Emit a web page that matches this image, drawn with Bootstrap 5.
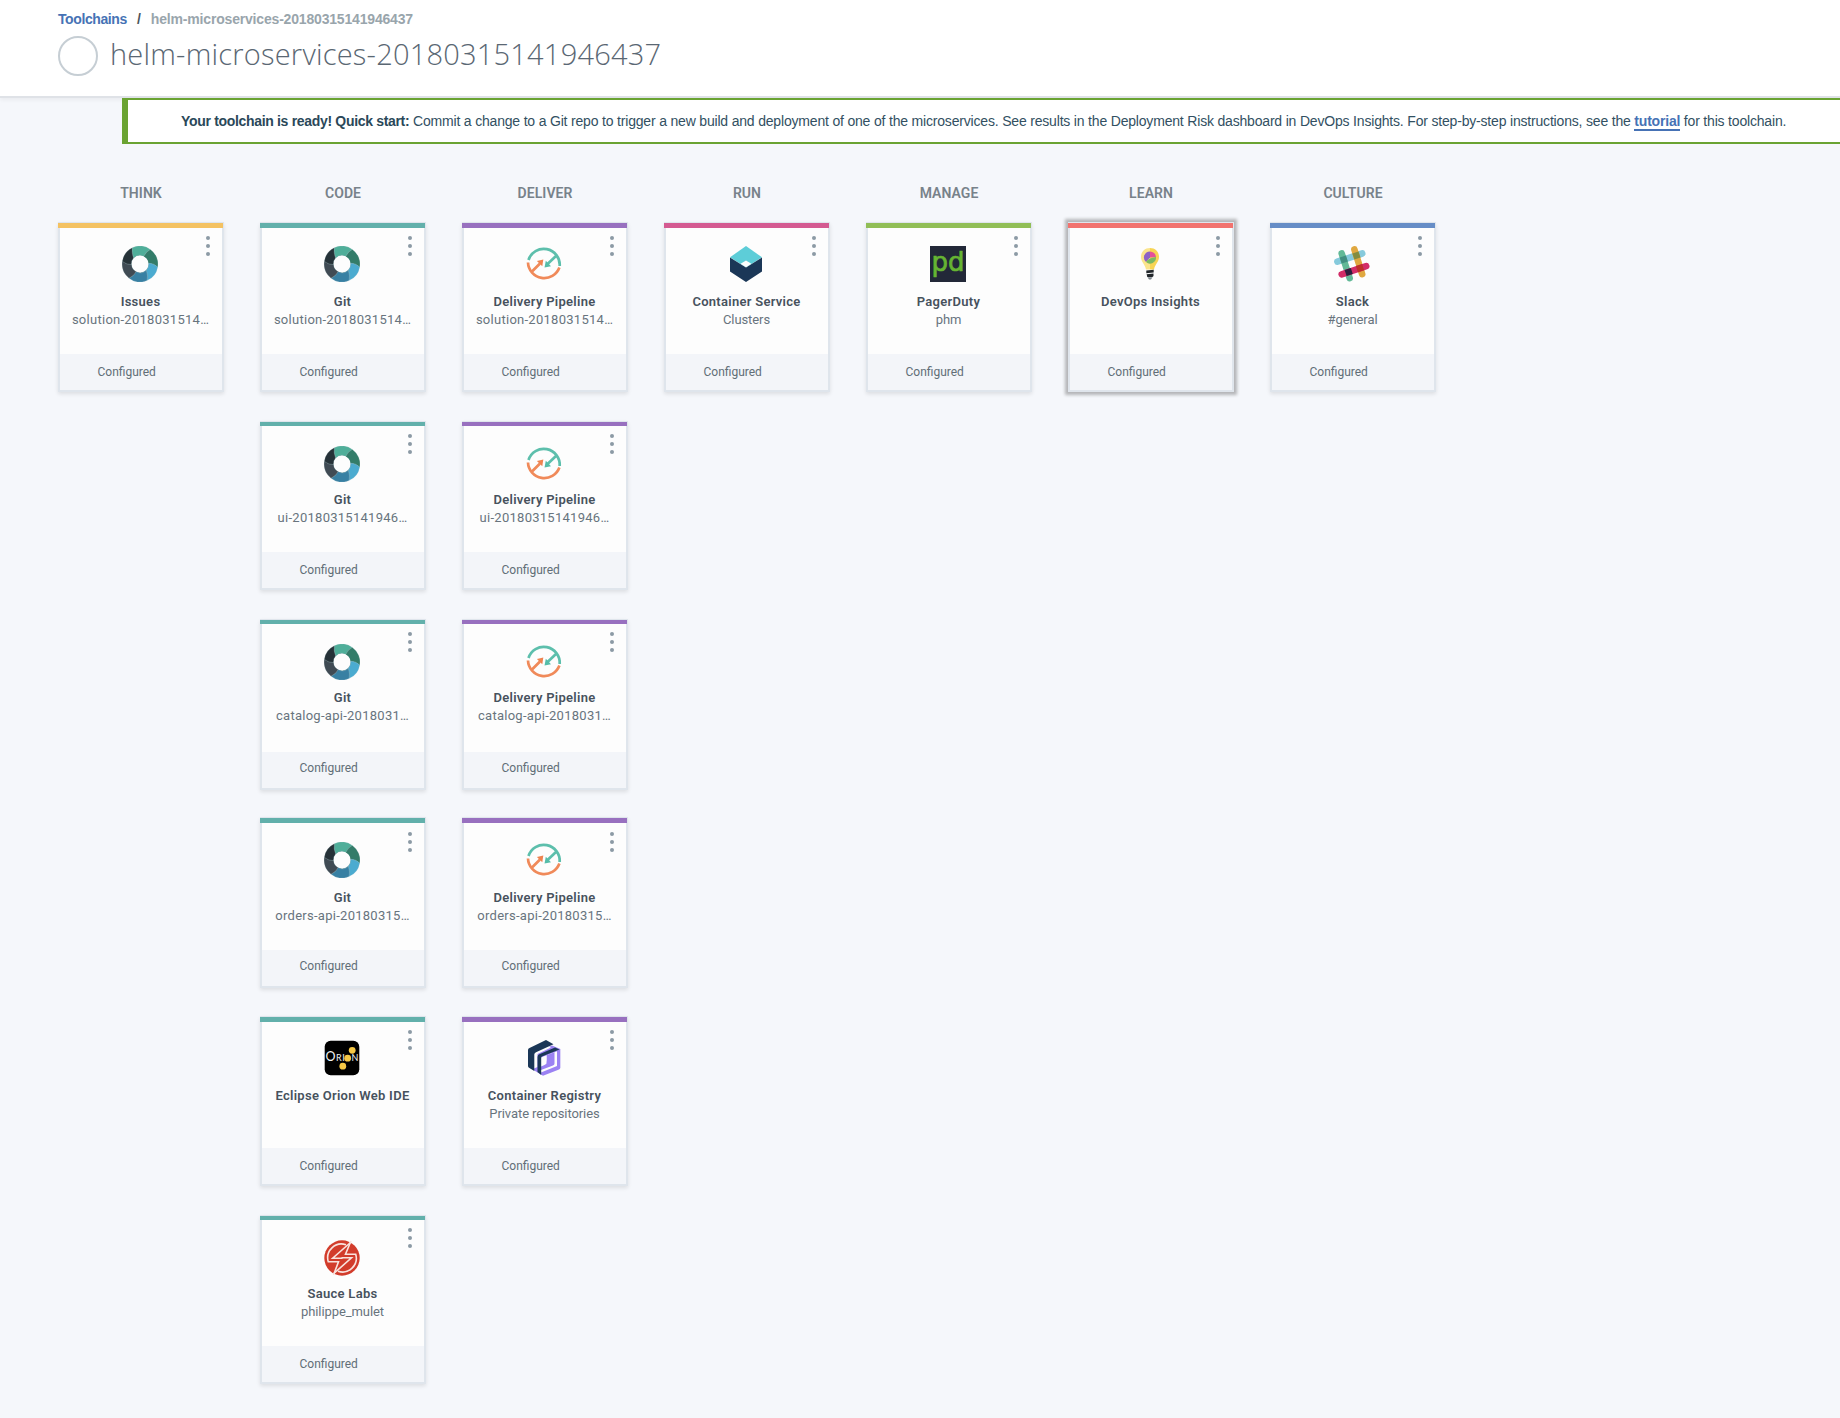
<!DOCTYPE html>
<html lang="en">
<head>
<meta charset="utf-8">
<meta name="viewport" content="width=device-width, initial-scale=1">
<title>helm-microservices-20180315141946437</title>
<link href="https://cdn.jsdelivr.net/npm/bootstrap@5.3.0/dist/css/bootstrap.min.css" rel="stylesheet">
<style>
body{background:#f5f7fb;font-family:Roboto,sans-serif;color:#5a6872;min-height:1418px;overflow-x:hidden}
.page-head{height:98px;background:#fff;border-bottom:2px solid #dfe2e7;box-shadow:0 2px 4px rgba(0,0,0,.05);padding:9px 0 0 58px}
.crumbs{font:700 14px/20px "Liberation Sans",sans-serif;letter-spacing:-.18px;height:20px}
.crumbs a{color:#4672b5;letter-spacing:-.4px;text-decoration:none}
.crumbs .slash{color:#4b555c;width:24px;text-align:center}
.crumbs .here{color:#99a5ac}
.title-row{margin-top:7px}
.ring{width:40px;height:40px;border:2px solid #c6ced4;border-radius:50%}
.page-title{font:300 29px/36px "Open Sans",sans-serif;letter-spacing:.22px;color:#5a6773;margin:0 0 0 12px}
.banner{margin-left:122px;height:46px;border:2px solid #6aa332;border-left-width:6px;border-right:0;background:#fff;padding-left:53px;font:14px/42px "Liberation Sans",sans-serif;letter-spacing:-.184px;color:#325062;white-space:nowrap;position:relative}
.banner b{letter-spacing:-.32px;color:#2a4859}
.banner a{font-weight:700;color:#4672b5;text-decoration:none;border-bottom:2px solid #4672b5;padding-bottom:0;line-height:16px;display:inline-block;letter-spacing:-.2px}
.board{padding:38px 0 0 58px;gap:36px}
.lane{width:166px}
.lane-name{font:600 14px/22px Roboto,sans-serif;letter-spacing:.05px;color:#78828a;text-align:center;height:40px;margin:0}
.slot{height:198px;--bar:4px;--dots:7px;--ico:20px;--gap:9px;--foot:36px;--cfg:18px;--h:169px}
.slot:nth-of-type(1){height:199px;--bar:5px;--dots:7px;--ico:18px;--gap:11px;--h:170px}
.slot:nth-of-type(3){--h:171px;--cfg:16px}
.slot:nth-of-type(4){height:199px;--bar:5px;--dots:8px;--gap:11px;--h:171px;--cfg:16px;--ico:19px}
.slot:nth-of-type(5){height:199px;--bar:5px;--dots:7px;--ico:18px;--gap:11px;--h:170px}
.tool{height:var(--h);border:2px solid #dfe5ec;border-top-width:1px;border-radius:0;background:#fdfdfd;box-shadow:0 2px 4px rgba(0,0,0,.1);width:166px}
.tool .stripe{height:var(--bar);margin:0 -1px 0 -2px;background:var(--c)}
.tool.hot{box-shadow:0 0 3px 3px #b4b5b8}
.tool .body{padding-top:var(--ico);text-align:center;padding-right:1px}
.tool .pic{width:36px;height:36px;display:block;margin:0 auto 0 62px}
.tool h3{font:600 13px/18px Roboto,sans-serif;letter-spacing:.28px;color:#47525d;margin:var(--gap) 0 0;white-space:nowrap}
.tool p{font:400 13px/18px Roboto,sans-serif;letter-spacing:-.08px;color:#68747d;margin:0;white-space:nowrap}
.tool p.num{letter-spacing:.27px}
.tool .state{height:36px;background:#f3f5f9;font-size:12px;line-height:calc(var(--cfg)*2);padding-left:37.5px;color:#616e77}
.kebab{right:12px;top:calc(var(--bar) + var(--dots) + 1px);gap:4px}
.kebab i{width:4px;height:4px;border-radius:50%;background:#8c9aa5}
.think{--c:#f4c262}.code{--c:#62b0ab}.deliver{--c:#9870bf}.run{--c:#d45a91}.manage{--c:#91be56}.learn{--c:#f2736f}.culture{--c:#668dc6}
</style>
<script src="https://cdn.jsdelivr.net/npm/bootstrap@5.3.0/dist/js/bootstrap.bundle.min.js"></script>
</head>
<body>
<svg width="0" height="0" class="position-absolute" aria-hidden="true">
<symbol id="git" viewBox="0 0 36 36">
<circle cx="18" cy="18" r="13" fill="none" stroke="#7fa5a8" stroke-width="9"/>
<g stroke="#b9cdcf" stroke-width=".2">
<path fill="#4fae99" d="M10.300 1.800A18 18 0 0 1 28.400 3.400Q24 5.500 21.800 10.500A8.500 8.500 0 0 0 11.500 12Q9.500 6.500 10.300 1.800Z"/>
<path fill="#337c69" d="M28.400 3.400A18 18 0 0 1 35.700 21.200Q32.500 17.500 26.500 17.200A8.500 8.500 0 0 0 21.800 10.500Q24 5.500 28.400 3.400Z"/>
<path fill="#4babd0" d="M35.700 21.200A18 18 0 0 1 25 34.600Q26.200 30 24.300 24.300A8.500 8.500 0 0 0 26.500 17.200Q32.500 17.500 35.700 21.200Z"/>
<path fill="#3880a3" d="M25 34.600A18 18 0 0 1 7 32.200Q12 30 14 25.600A8.500 8.500 0 0 0 24.300 24.300Q26.200 30 25 34.600Z"/>
<path fill="#404b54" d="M7 32.200A18 18 0 0 1 .3 15.200Q4 18.500 9.500 18.600A8.500 8.500 0 0 0 14 25.600Q12 30 7 32.200Z"/>
<path fill="#263238" d="M.3 15.200A18 18 0 0 1 10.300 1.800Q9.500 6.500 11.500 12A8.500 8.500 0 0 0 9.500 18.600Q4 18.500 .3 15.200Z"/></g>
<circle cx="18" cy="18" r="8.200" fill="#fdfdfd"/>
</symbol>
<symbol id="pipe" viewBox="0 0 36 36">
<g fill="none" stroke-width="2.700">
<path stroke="#5dbfac" d="M2.500 14A16 16 0 0 1 33.700 20M30.500 9.500L21 18.500"/>
<path stroke="#f08a5a" d="M2 16.500A16.200 16.200 0 0 0 33.400 21.500M5.500 26L14 17.500"/></g>
<path fill="#55bda9" d="M18.500 21.500L19.800 14.700L25 20.200Z"/><path fill="#ef8350" d="M17.300 13.600L16.300 20.200L10.900 14.900Z"/>
</symbol>
<symbol id="cluster" viewBox="0 0 36 36">
<path fill="#5dcdd8" d="M18 0L34 11.300L18 21.500L2 11.300Z"/><path fill="#1b3757" d="M2 11.500L18 21.500L34 11.500V25.500L18 36L2 25.500Z"/>
<path fill="#fdfdfd" d="M12.600 17.700L18 14.500L23.400 17.700L18 21.300Z"/>
</symbol>
<symbol id="bulb" viewBox="0 0 36 36">
<path fill="#fae48c" d="M18 2C12.500 2 9 6 9 11C9 16 13 18 14 23.500H18Z"/><path fill="#f7d454" d="M18 2C23.500 2 27 6 27 11C27 16 23 18 22 23.500H18Z"/>
<path fill="#8d62c5" d="M18 5.500A6 6 0 0 0 14 16L18 11.500Z"/><path fill="#e5509a" d="M18 5.500A6 6 0 0 1 24 11L18 11.500Z"/><path fill="#7bb963" d="M24 11A6 6 0 0 1 14 16Q16 12 24 11Z"/>
<path fill="#22272b" d="M14.300 24.500L21.700 23.800V26.600L14.300 27.300ZM14.600 28.300L21.500 27.600V30L20.500 31H15.300Z"/><path fill="#7d858b" d="M15.500 31.300H20.500L19 33.500H17Z"/>
</symbol>
<symbol id="slack" viewBox="0 0 36 36">
<g stroke-width="6.600" stroke-linecap="round"><path stroke="#86cadc" d="M3.400 15.700L28.200 7.500"/><path stroke="#e0a840" d="M20.400 3.500L28.200 28.200"/><path stroke="#62b997" d="M7.700 7.500L15.700 32.200"/><path stroke="#d22d68" d="M7.700 28.300L32.200 20.200"/></g>
<g><path fill="#428f80" d="M5.700 11.500L11.900 9.500L13.900 15.600L7.700 17.600Z"/><path fill="#828c3f" d="M18.400 7.400L24.500 5.400L26.500 11.500L20.400 13.500Z"/><path fill="#2d1f3e" d="M10.600 24L16.800 22L18.800 28.100L12.600 30.100Z"/><path fill="#bd3128" d="M22.700 20L28.900 18L30.900 24.200L24.700 26.200Z" transform="translate(-.8 0)"/></g>
</symbol>
<symbol id="registry" viewBox="0 0 36 36">
<path fill="#9b82f3" d="M8 14L26 5.500L34.300 9V27.500Q34.300 28.800 33 29.500L17 35.800L7.500 30Z"/>
<path fill="#fdfdfd" d="M8 11.800L20.500 6L25 7.500L11.500 14V27L8 28.500Z"/>
<path fill="#1b3757" d="M2 10Q2 8.700 3.500 8L20 0L27.500 4.300L10 12.300Q8.300 13 8.300 14.500V31L3 27.800Q2 27.200 2 26Z"/>
<path fill="#fdfdfd" d="M15 17.500L31 11.200V26L15 32.500Z"/>
<path fill="#9b82f3" d="M15 26.500L18 25.300Q19.500 24.600 20.500 23.500V15.200L28.500 12.200V23.500Q28.500 25 27 25.600L15 30Z"/>
<path fill="#fdfdfd" d="M15 18L20.500 15.500V20Q20.500 22 19 22.700L15 24.500Z"/>
<path fill="#1b3757" d="M11.500 32V17Q11.500 15 13.300 14.200L29 7.500L33.500 9.500L16.500 16.200Q15.200 16.600 15.200 17.800V35Z"/>
</symbol>
<symbol id="sauce" viewBox="0 0 36 36"><circle cx="18" cy="18" r="17.700" fill="#d23c2b"/>
<g fill="none" stroke="#f9e3de" stroke-width="1.600"><path d="M22 4.800A13.800 13.800 0 0 0 4.300 21.800H14.500L9.500 35"/><path d="M14 31.200A13.800 13.800 0 0 0 31.700 14.200H21.500L27 1"/><path d="M26.500 2.500L8.700 18.200H18.500M9.800 33.500L27.500 17.800H17.500"/></g>
</symbol>
</svg>

<header class="page-head">
<nav class="crumbs d-flex"><a href="#">Toolchains</a><span class="slash">/</span><span class="here">helm-microservices-20180315141946437</span></nav>
<div class="title-row d-flex"><span class="ring"></span><h1 class="page-title">helm-microservices-20180315141946437</h1></div>
</header>
<div class="banner"><b>Your toolchain is ready! Quick start:</b> Commit a change to a Git repo to trigger a new build and deployment of one of the microservices. See results in the Deployment Risk dashboard in DevOps Insights. For step-by-step instructions, see the <a href="#">tutorial</a> for this toolchain.</div>

<main class="board d-flex">
<section class="lane think"><h2 class="lane-name">THINK</h2>
<div class="slot"><div class="tool card"><div class="stripe"></div><div class="kebab position-absolute d-flex flex-column"><i></i><i></i><i></i></div><div class="body flex-grow-1"><svg class="pic"><use href="#git"/></svg><h3>Issues</h3><p class="num">solution-2018031514…</p></div><div class="state">Configured</div></div></div>
</section>
<section class="lane code"><h2 class="lane-name">CODE</h2>
<div class="slot"><div class="tool card"><div class="stripe"></div><div class="kebab position-absolute d-flex flex-column"><i></i><i></i><i></i></div><div class="body flex-grow-1"><svg class="pic"><use href="#git"/></svg><h3>Git</h3><p class="num">solution-2018031514…</p></div><div class="state">Configured</div></div></div>
<div class="slot"><div class="tool card"><div class="stripe"></div><div class="kebab position-absolute d-flex flex-column"><i></i><i></i><i></i></div><div class="body flex-grow-1"><svg class="pic"><use href="#git"/></svg><h3>Git</h3><p class="num">ui-20180315141946…</p></div><div class="state">Configured</div></div></div>
<div class="slot"><div class="tool card"><div class="stripe"></div><div class="kebab position-absolute d-flex flex-column"><i></i><i></i><i></i></div><div class="body flex-grow-1"><svg class="pic"><use href="#git"/></svg><h3>Git</h3><p class="num">catalog-api-2018031…</p></div><div class="state">Configured</div></div></div>
<div class="slot"><div class="tool card"><div class="stripe"></div><div class="kebab position-absolute d-flex flex-column"><i></i><i></i><i></i></div><div class="body flex-grow-1"><svg class="pic"><use href="#git"/></svg><h3>Git</h3><p class="num">orders-api-20180315…</p></div><div class="state">Configured</div></div></div>
<div class="slot"><div class="tool card"><div class="stripe"></div><div class="kebab position-absolute d-flex flex-column"><i></i><i></i><i></i></div><div class="body flex-grow-1">
<svg class="pic" viewBox="0 0 36 36"><rect x=".7" y=".7" width="34.600" height="34.600" rx="6" fill="#000"/>
<text y="21.300" font-family="Lato" font-size="9" fill="#f2f2f2"><tspan x="1.500" font-size="12.500">O</tspan><tspan x="12">R</tspan><tspan x="18.200">I</tspan><tspan x="27.500">N</tspan></text>
<g fill="#f6c846"><circle cx="28.200" cy="10.300" r="3.400"/><circle cx="23.700" cy="18.200" r="3.400"/><circle cx="18.800" cy="26.200" r="3.400"/></g></svg>
<h3>Eclipse Orion Web IDE</h3></div><div class="state">Configured</div></div></div>
<div class="slot"><div class="tool card"><div class="stripe"></div><div class="kebab position-absolute d-flex flex-column"><i></i><i></i><i></i></div><div class="body flex-grow-1"><svg class="pic"><use href="#sauce"/></svg><h3>Sauce Labs</h3><p>philippe_mulet</p></div><div class="state">Configured</div></div></div>
</section>
<section class="lane deliver"><h2 class="lane-name">DELIVER</h2>
<div class="slot"><div class="tool card"><div class="stripe"></div><div class="kebab position-absolute d-flex flex-column"><i></i><i></i><i></i></div><div class="body flex-grow-1"><svg class="pic"><use href="#pipe"/></svg><h3>Delivery Pipeline</h3><p class="num">solution-2018031514…</p></div><div class="state">Configured</div></div></div>
<div class="slot"><div class="tool card"><div class="stripe"></div><div class="kebab position-absolute d-flex flex-column"><i></i><i></i><i></i></div><div class="body flex-grow-1"><svg class="pic"><use href="#pipe"/></svg><h3>Delivery Pipeline</h3><p class="num">ui-20180315141946…</p></div><div class="state">Configured</div></div></div>
<div class="slot"><div class="tool card"><div class="stripe"></div><div class="kebab position-absolute d-flex flex-column"><i></i><i></i><i></i></div><div class="body flex-grow-1"><svg class="pic"><use href="#pipe"/></svg><h3>Delivery Pipeline</h3><p class="num">catalog-api-2018031…</p></div><div class="state">Configured</div></div></div>
<div class="slot"><div class="tool card"><div class="stripe"></div><div class="kebab position-absolute d-flex flex-column"><i></i><i></i><i></i></div><div class="body flex-grow-1"><svg class="pic"><use href="#pipe"/></svg><h3>Delivery Pipeline</h3><p class="num">orders-api-20180315…</p></div><div class="state">Configured</div></div></div>
<div class="slot"><div class="tool card"><div class="stripe"></div><div class="kebab position-absolute d-flex flex-column"><i></i><i></i><i></i></div><div class="body flex-grow-1"><svg class="pic"><use href="#registry"/></svg><h3>Container Registry</h3><p>Private repositories</p></div><div class="state">Configured</div></div></div>
</section>
<section class="lane run"><h2 class="lane-name">RUN</h2>
<div class="slot"><div class="tool card"><div class="stripe"></div><div class="kebab position-absolute d-flex flex-column"><i></i><i></i><i></i></div><div class="body flex-grow-1"><svg class="pic"><use href="#cluster"/></svg><h3>Container Service</h3><p>Clusters</p></div><div class="state">Configured</div></div></div>
</section>
<section class="lane manage"><h2 class="lane-name">MANAGE</h2>
<div class="slot"><div class="tool card"><div class="stripe"></div><div class="kebab position-absolute d-flex flex-column"><i></i><i></i><i></i></div><div class="body flex-grow-1">
<svg class="pic" viewBox="0 0 36 36"><rect width="36" height="36" fill="#222838"/><text x="1.500" y="25.300" font-family="DejaVu Sans" font-size="26" textLength="33" lengthAdjust="spacingAndGlyphs" fill="#66b432" stroke="#66b432" stroke-width=".7">pd</text></svg>
<h3>PagerDuty</h3><p>phm</p></div><div class="state">Configured</div></div></div>
</section>
<section class="lane learn"><h2 class="lane-name">LEARN</h2>
<div class="slot"><div class="tool card hot"><div class="stripe"></div><div class="kebab position-absolute d-flex flex-column"><i></i><i></i><i></i></div><div class="body flex-grow-1"><svg class="pic"><use href="#bulb"/></svg><h3>DevOps Insights</h3></div><div class="state">Configured</div></div></div>
</section>
<section class="lane culture"><h2 class="lane-name">CULTURE</h2>
<div class="slot"><div class="tool card"><div class="stripe"></div><div class="kebab position-absolute d-flex flex-column"><i></i><i></i><i></i></div><div class="body flex-grow-1"><svg class="pic"><use href="#slack"/></svg><h3>Slack</h3><p>#general</p></div><div class="state">Configured</div></div></div>
</section>
</main>
</body>
</html>
